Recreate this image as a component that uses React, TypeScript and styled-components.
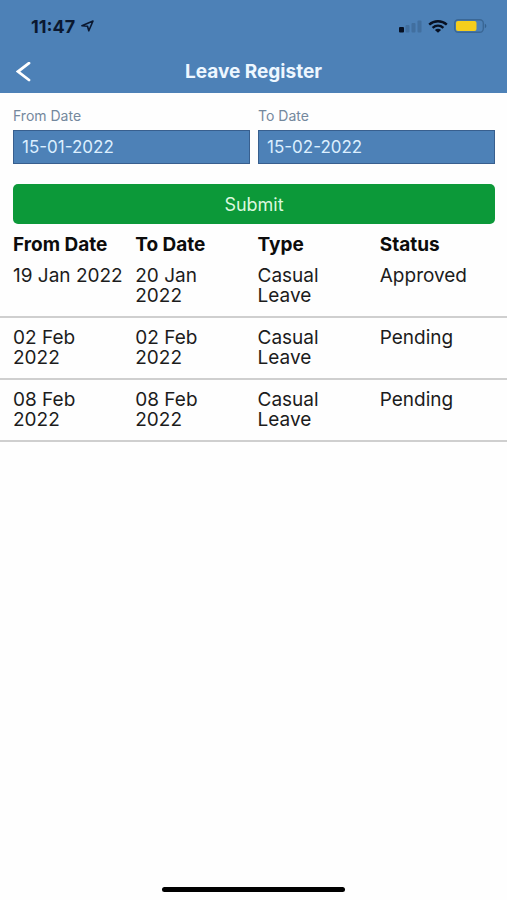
import React, { useState } from "react";
import styled, { createGlobalStyle } from "styled-components";

const GlobalStyle = createGlobalStyle`
  *, *::before, *::after { box-sizing: border-box; }
  body {
    margin: 0;
    background: #fefefe;
    color: #1c1c1c;
    font-family: Inter, "Liberation Sans", sans-serif;
  }
`;

const Screen = styled.div`
  display: flex;
  flex-direction: column;
  min-height: 100vh;
`;

const Header = styled.header`
  background: #4d81b7;
`;

const StatusBar = styled.div`
  display: flex;
  align-items: center;
  justify-content: space-between;
  height: 50px;
  padding: 2px 20px 0 31px;
`;

const Clock = styled.div`
  display: flex;
  align-items: center;
  gap: 6px;
  color: #0b1830;
  font-size: 18px;
  font-weight: 700;
`;

const StatusIcons = styled.div`
  display: flex;
  align-items: center;
  gap: 6px;
`;

const TitleBar = styled.div`
  display: grid;
  grid-template-columns: 48px 1fr 48px;
  align-items: center;
  height: 43px;
`;

const BackButton = styled.button`
  display: flex;
  align-items: center;
  height: 40px;
  padding: 0 0 0 16px;
  border: 0;
  background: none;
  color: #ffffff;
  cursor: pointer;
`;

const Title = styled.h1`
  margin: 0;
  color: #eef7ff;
  font-size: 19px;
  font-weight: 700;
  line-height: 24px;
  text-align: center;
`;

const Main = styled.main`
  flex: 1;
`;

const FilterForm = styled.form`
  display: grid;
  grid-template-columns: 1fr 1fr;
  column-gap: 8px;
  row-gap: 20px;
  padding: 16px 12px 11px 13px;
`;

const Field = styled.label`
  display: flex;
  flex-direction: column;
  gap: 7px;
  color: #74889d;
  font-size: 14px;
  line-height: 14px;
`;

const DateInput = styled.input`
  width: 100%;
  height: 34px;
  padding: 0 8px;
  border: 1px solid #385f8e;
  border-radius: 0;
  background: #4d81b7;
  color: #dcefff;
  font: inherit;
  font-size: 17px;
`;

const SubmitButton = styled.button`
  grid-column: 1 / -1;
  height: 40px;
  border: 0;
  border-radius: 5px;
  background: #0c9939;
  color: #dcf8df;
  font: inherit;
  font-size: 18px;
  cursor: pointer;
`;

const Register = styled.table`
  display: block;
  font-size: 19px;
  line-height: 20px;
`;

const RowGroup = styled.tbody`
  display: block;
`;

const HeadGroup = styled.thead`
  display: block;
`;

const Row = styled.tr<{ $heading?: boolean }>`
  display: grid;
  grid-template-columns: repeat(4, 1fr);
  padding: ${(p) => (p.$heading ? "0 5px 1px 13px" : "10px 5px 10px 13px")};
  border-bottom: ${(p) => (p.$heading ? "0" : "2px solid #cfcfcf")};
`;

const HeadCell = styled.th`
  padding: 0;
  color: #0c0c0c;
  font-weight: 700;
  text-align: left;
`;

const Cell = styled.td`
  padding: 0;
  white-space: pre-line;
`;

const Footer = styled.footer`
  display: flex;
  justify-content: center;
  padding-bottom: 8px;
`;

const HomeIndicator = styled.div`
  width: 36%;
  height: 5px;
  border-radius: 3px;
  background: #000000;
`;

const LocationIcon = () => (
  <svg width="13" height="12" viewBox="0 0 13 12" aria-hidden="true">
    <path d="M0.9 5.8 12 1 7.8 10.8 6.5 6.2Z" fill="none" stroke="#0b1830" strokeWidth="1.6" strokeLinejoin="round" />
  </svg>
);

const SignalIcon = () => (
  <svg width="23" height="13" viewBox="0 0 23 13" aria-label="Signal">
    <rect x="0" y="7" width="5" height="5.5" rx="1" fill="#071022" />
    <rect x="6.5" y="5" width="4" height="7.5" rx="1" fill="#416f9f" />
    <rect x="12.5" y="3" width="4" height="9.5" rx="1" fill="#416f9f" />
    <rect x="18.5" y="0.5" width="4" height="12" rx="1" fill="#416f9f" />
  </svg>
);

const WifiIcon = () => (
  <svg width="20" height="13" viewBox="0 0 20 13" aria-label="Wi-Fi">
    <g fill="none" stroke="#071022" strokeWidth="2.4">
      <path d="M1.2 4.7C6.2.1 13.8.1 18.8 4.7" />
      <path d="M4.6 7.9C7.8 5 12.2 5 15.4 7.9" />
    </g>
    <path d="M6.9 9.9C8.7 8.4 11.3 8.4 13.1 9.9L10 12.8Z" fill="#071022" />
  </svg>
);

const BatteryIcon = () => (
  <svg width="33" height="14" viewBox="0 0 33 14" aria-label="Battery">
    <rect x="0.7" y="0.7" width="28.6" height="12.6" rx="3.5" fill="none" stroke="#3a6795" strokeWidth="1.4" />
    <rect x="2" y="2" width="20.5" height="10" rx="2" fill="#f6ce1c" />
    <path d="M30.8 4.8C32.8 5.5 32.8 8.5 30.8 9.2Z" fill="#35618f" />
  </svg>
);

const BackIcon = () => (
  <svg width="15" height="20" viewBox="0 0 15 20" aria-hidden="true">
    <path d="M13 1.2 2 9.6 13 18" fill="none" stroke="currentColor" strokeWidth="2.8" strokeLinecap="round" strokeLinejoin="miter" />
  </svg>
);

const columns = ["From Date", "To Date", "Type", "Status"];

const leaves = [
  ["19 Jan 2022", "20 Jan\n2022", "Casual\nLeave", "Approved"],
  ["02 Feb\n2022", "02 Feb\n2022", "Casual\nLeave", "Pending"],
  ["08 Feb\n2022", "08 Feb\n2022", "Casual\nLeave", "Pending"],
];

export default function App() {
  const [from, setFrom] = useState("15-01-2022");
  const [to, setTo] = useState("15-02-2022");

  return (
    <Screen>
      <GlobalStyle />
      <Header>
        <StatusBar>
          <Clock>
            11:47
            <LocationIcon />
          </Clock>
          <StatusIcons>
            <SignalIcon />
            <WifiIcon />
            <BatteryIcon />
          </StatusIcons>
        </StatusBar>
        <TitleBar>
          <BackButton type="button" aria-label="Back">
            <BackIcon />
          </BackButton>
          <Title>Leave Register</Title>
        </TitleBar>
      </Header>
      <Main>
        <FilterForm onSubmit={(e) => e.preventDefault()}>
          <Field>
            From Date
            <DateInput value={from} onChange={(e) => setFrom(e.target.value)} />
          </Field>
          <Field>
            To Date
            <DateInput value={to} onChange={(e) => setTo(e.target.value)} />
          </Field>
          <SubmitButton type="submit">Submit</SubmitButton>
        </FilterForm>
        <Register>
          <HeadGroup>
            <Row $heading>
              {columns.map((name) => (
                <HeadCell key={name} scope="col">{name}</HeadCell>
              ))}
            </Row>
          </HeadGroup>
          <RowGroup>
            {leaves.map((leave) => (
              <Row key={leave[0]}>
                {leave.map((value, i) => (
                  <Cell key={columns[i]}>{value}</Cell>
                ))}
              </Row>
            ))}
          </RowGroup>
        </Register>
      </Main>
      <Footer>
        <HomeIndicator />
      </Footer>
    </Screen>
  );
}
